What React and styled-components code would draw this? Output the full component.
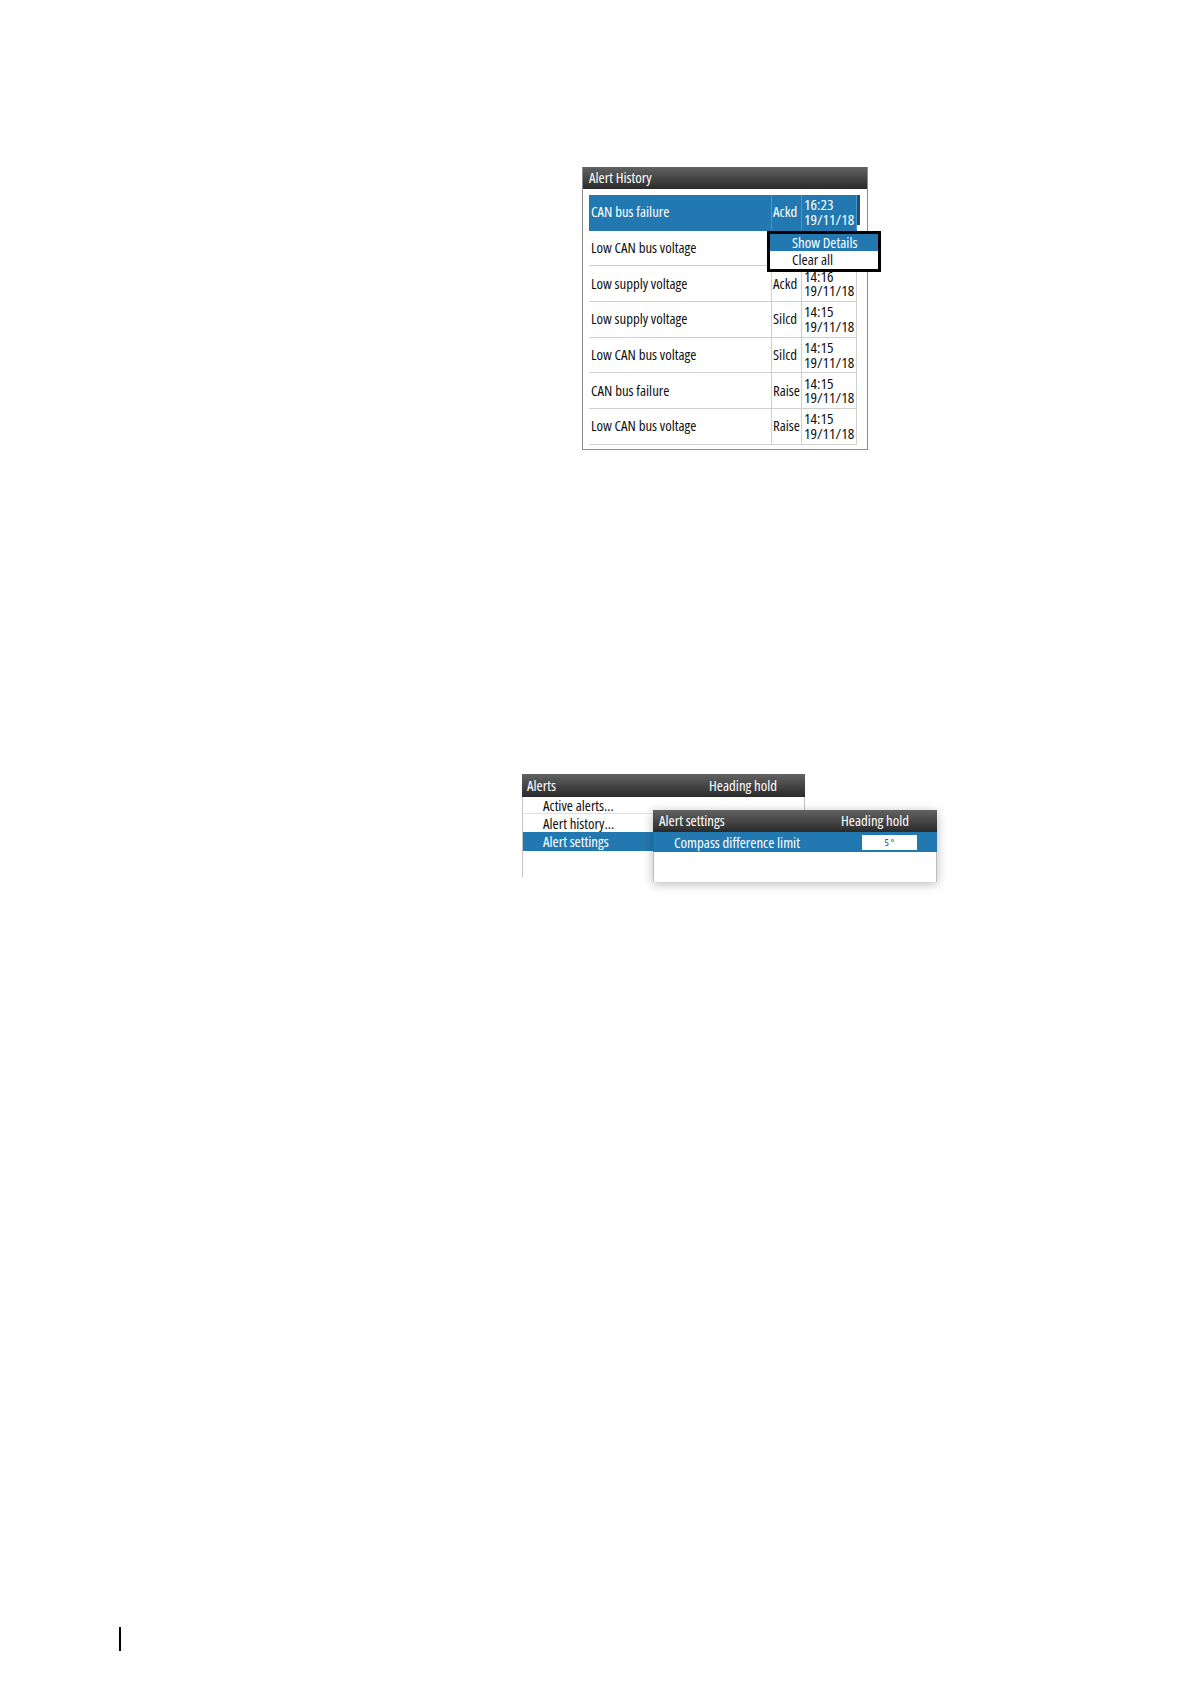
import React from "react";
import styled, { createGlobalStyle } from "styled-components";

const Global = createGlobalStyle`
  html, body { margin: 0; padding: 0; background: #fff; }
  body { font-family: "Open Sans", "DejaVu Sans Condensed", sans-serif; }
`;

const FONT = `"Open Sans", "DejaVu Sans Condensed", sans-serif`;
const BLUE = "#2279b1";
const FS = "14.8px";

const Page = styled.div`
  width: 1191px;
  height: 1684px;
  position: relative;
  font-family: ${FONT};
  font-stretch: 75%;
`;

const Figure = styled.div`
  position: relative;
  margin-left: ${(p) => p.$left}px;
  padding-top: ${(p) => p.$top}px;
  width: max-content;
`;

const HistoryPanel = styled.div`
  position: relative;
  width: 284px;
  height: 282px;
  border: 1px solid #8c8c8c;
  border-top: none;
  background: #fff;
  display: flex;
  flex-direction: column;
`;

const TitleBar = styled.div`
  height: ${(p) => p.$h || 22}px;
  box-sizing: border-box;
  flex: none;
  display: flex;
  align-items: center;
  justify-content: space-between;
  padding: 0 ${(p) => p.$pr || 6}px 2px ${(p) => p.$pl || 6}px;
  background: linear-gradient(#626262, #2a2a2a);
  color: #fff;
  font-size: ${FS};
  white-space: nowrap;
`;

const HistoryBody = styled.div`
  flex: 1;
  display: flex;
  padding: 6px 7px 4px 6px;
  overflow: hidden;
`;

const List = styled.div`
  width: 268px;
  display: grid;
  grid-template-rows: repeat(7, 35.7px);
`;

const Row = styled.div`
  display: grid;
  grid-template-columns: 183px 30px 55px;
  border-bottom: 1px solid ${(p) => (p.$sel ? BLUE : "#cfcfcf")};
  background: ${(p) => (p.$sel ? BLUE : "#fff")};
  color: ${(p) => (p.$sel ? "#fff" : "#111")};
  font-size: ${FS};
`;

const Cell = styled.div`
  display: flex;
  align-items: center;
  padding-left: ${(p) => p.$pl ?? 1}px;
  padding-bottom: 2px;
  border-right: 1px solid ${(p) => (p.$sel ? "#4f94c2" : "#cfcfcf")};
  white-space: nowrap;
  overflow: hidden;
`;

const TimeCell = styled(Cell)`
  flex-direction: column;
  align-items: flex-start;
  justify-content: center;
  font-size: 15.3px;
  line-height: 14.5px;
  padding-left: 2px;
  padding-bottom: 1px;
`;

const Track = styled.div`
  width: 3px;
  display: flex;
  flex-direction: column;
`;

const Thumb = styled.div`
  height: 30px;
  background: #1b4f78;
`;

const Popup = styled.div`
  position: absolute;
  left: 184px;
  top: 64px;
  width: 108px;
  border: 3px solid #000;
  background: #fff;
  padding-bottom: 1px;
  font-size: ${FS};
`;

const PopupItem = styled.div`
  height: 17px;
  line-height: 16px;
  padding-left: 22px;
  background: ${(p) => (p.$sel ? BLUE : "#fff")};
  color: ${(p) => (p.$sel ? "#fff" : "#111")};
  white-space: nowrap;
`;

const AlertsPanel = styled.div`
  width: 283px;
  display: flex;
  flex-direction: column;
`;

const AlertsBody = styled.div`
  height: 80px;
  border-left: 1px solid #c4c4c4;
  border-right: 1px solid #c4c4c4;
  display: flex;
  flex-direction: column;
`;

const MenuItem = styled.div`
  box-sizing: border-box;
  height: ${(p) => p.$h}px;
  flex: none;
  display: flex;
  align-items: center;
  padding-left: 20px;
  padding-bottom: 1px;
  font-size: ${FS};
  background: ${(p) => (p.$sel ? BLUE : "transparent")};
  color: ${(p) => (p.$sel ? "#fff" : "#111")};
  border-bottom: ${(p) => (p.$line ? "1px solid #e2e2e2" : "none")};
  white-space: nowrap;
`;

const SettingsPanel = styled.div`
  position: absolute;
  left: 131px;
  top: ${(p) => p.$top}px;
  width: 284px;
  height: 72px;
  background: #fff;
  display: flex;
  flex-direction: column;
  box-shadow: 0 2px 10px rgba(0, 0, 0, 0.28);
`;

const SettingsBody = styled.div`
  flex: 1;
  border-left: 1px solid #bdbdbd;
  border-right: 1px solid #bdbdbd;
`;

const SettingRow = styled.div`
  height: 20px;
  display: flex;
  align-items: center;
  justify-content: space-between;
  padding: 0 20px 0 21px;
  background: ${BLUE};
  color: #fff;
  font-size: ${FS};
  white-space: nowrap;
`;

const ValueBox = styled.div`
  width: 55px;
  height: 15px;
  background: #fff;
  color: #222;
  font-size: 9.5px;
  display: flex;
  align-items: center;
  justify-content: center;
`;

const Footer = styled.div`
  position: absolute;
  left: 119px;
  top: 1627px;
  width: 2px;
  height: 24px;
  background: #000;
`;

const rows = [
  ["CAN bus failure", "Ackd", "16:23", "19/11/18"],
  ["Low CAN bus voltage", "", "", ""],
  ["Low supply voltage", "Ackd", "14:16", "19/11/18"],
  ["Low supply voltage", "Silcd", "14:15", "19/11/18"],
  ["Low CAN bus voltage", "Silcd", "14:15", "19/11/18"],
  ["CAN bus failure", "Raise", "14:15", "19/11/18"],
  ["Low CAN bus voltage", "Raise", "14:15", "19/11/18"],
];

const SECOND_TOP = 774 - 167 - 283;

export default function App() {
  return (
    <Page>
      <Global />
      <Figure $left={582} $top={167}>
        <HistoryPanel>
          <TitleBar>Alert History</TitleBar>
          <HistoryBody>
            <List>
              {rows.map((r, i) => (
                <Row key={i} $sel={i === 0}>
                  <Cell $sel={i === 0} $pl={2}>{r[0]}</Cell>
                  <Cell $sel={i === 0}>{r[1]}</Cell>
                  <TimeCell $sel={i === 0}>
                    <span>{r[2]}</span>
                    <span>{r[3]}</span>
                  </TimeCell>
                </Row>
              ))}
            </List>
            <Track>
              <Thumb />
            </Track>
          </HistoryBody>
          <Popup>
            <PopupItem $sel>Show Details</PopupItem>
            <PopupItem>Clear all</PopupItem>
          </Popup>
        </HistoryPanel>
      </Figure>

      <Figure $left={522} $top={SECOND_TOP}>
        <AlertsPanel>
          <TitleBar $h={23} $pr={28} $pl={5}>
            <span>Alerts</span>
            <span>Heading hold</span>
          </TitleBar>
          <AlertsBody>
            <MenuItem $h={17} $line>Active alerts...</MenuItem>
            <MenuItem $h={18}>Alert history...</MenuItem>
            <MenuItem $h={19} $sel>Alert settings</MenuItem>
          </AlertsBody>
        </AlertsPanel>
        <SettingsPanel $top={SECOND_TOP + 36}>
          <TitleBar $pr={28} $pl={6}>
            <span>Alert settings</span>
            <span>Heading hold</span>
          </TitleBar>
          <SettingRow>
            <span>Compass difference limit</span>
            <ValueBox>5 °</ValueBox>
          </SettingRow>
          <SettingsBody />
        </SettingsPanel>
      </Figure>
      <Footer />
    </Page>
  );
}
